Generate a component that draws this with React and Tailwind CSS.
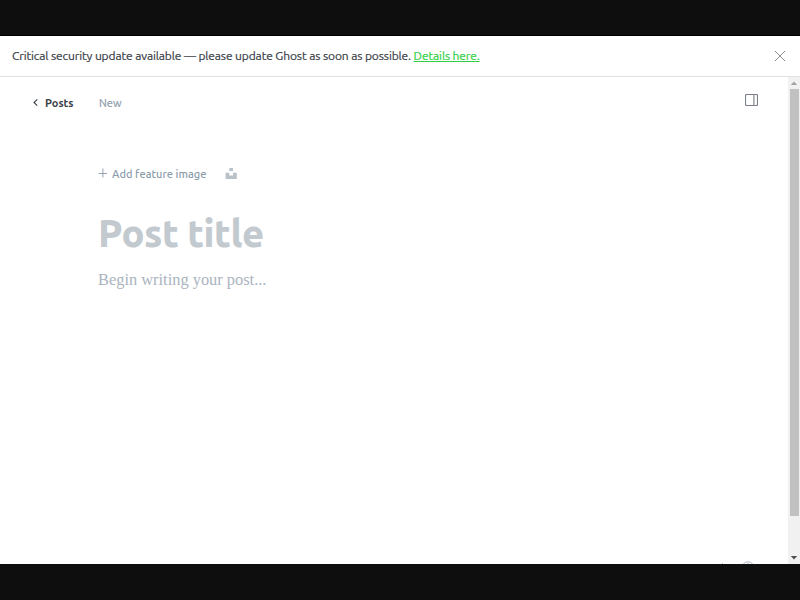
function CloseIcon() {
  return (
    <svg className="block h-[10px] w-[10px]" viewBox="0 0 10 10" fill="none" stroke="#7c8083" strokeWidth="0.9">
      <path d="M0 0L10 10M10 0L0 10" />
    </svg>
  );
}

function Banner() {
  return (
    <div className="flex h-[41px] shrink-0 items-center justify-between border-b border-[#dfe1e3] pl-3 pr-[15px]">
      <p className="whitespace-nowrap pb-px text-[12px] leading-4 tracking-[-0.12px] text-[#394047] [-webkit-text-stroke:0.2px]">
        Critical security update available — please update Ghost as soon as possible.{" "}
        <a href="#" className="text-[#30cf43] underline underline-offset-1">Details here.</a>
      </p>
      <button aria-label="Close" className="pb-px"><CloseIcon /></button>
    </div>
  );
}

function EditorHeader() {
  return (
    <header className="flex h-[50px] items-center pl-[33px] pr-[30px] text-[11px] leading-4">
      <a href="#" className="flex w-[66px] items-center pt-px font-bold text-[#394047]">
        <svg className="mr-[7px] h-[7px] w-[5px]" viewBox="0 0 5 7" fill="none" stroke="#394047" strokeWidth="1.1">
          <path d="M4.3 0.4L1 3.5L4.3 6.6" />
        </svg>
        Posts
      </a>
      <span className="pt-px text-[#8b9cab] [-webkit-text-stroke:0.2px]">New</span>
      <button aria-label="Settings" className="mb-[5px] ml-auto">
        <svg className="block h-3 w-[13px]" viewBox="0 0 13 12" fill="none" stroke="#7c8288" strokeWidth="1.15">
          <rect x="0.5" y="0.5" width="12" height="11" rx="1.2" />
          <path d="M8.9 0.5V11.5" />
        </svg>
      </button>
    </header>
  );
}

function Editor() {
  return (
    <main className="relative min-w-0 flex-1 overflow-hidden">
      <EditorHeader />
      <div className="pl-[98px] pt-[38px]">
        <div className="flex h-4 items-center text-[11px] leading-4 text-[#8b9cab]">
          <svg className="mb-px mr-[5px] h-[10px] w-[9px]" viewBox="0 0 9 10" stroke="#8b9cab" strokeWidth="0.9">
            <path d="M4.9 0.5V9.5M0.5 5.5H9" />
          </svg>
          <span className="w-[113px] whitespace-nowrap pt-px font-medium tracking-[0.04px]">Add feature image</span>
          <svg className="h-[11px] w-3" viewBox="0 0 12 11" fill="#b9c2c8">
            <path d="M4.3 0H8V3H4.3ZM0.6 4.7H4.3V7.5H8V4.7H11.8V11H0.6Z" />
          </svg>
        </div>
        <h1 className="mt-[27px] whitespace-nowrap text-[38px] font-extrabold leading-[50px] tracking-[-0.45px] text-[#c3cacf]">Post title</h1>
        <p className="mt-[10px] whitespace-nowrap font-['Liberation_Serif',serif] text-[16.4px] leading-6 text-[#abb4bf]">Begin writing your post...</p>
      </div>
      <div className="absolute left-[722px] top-[486px] flex items-start">
        <span className="h-1 w-px bg-[#b5bcc4]" />
        <svg className="-mt-[2px] ml-[18px] h-[14px] w-[14px]" viewBox="0 0 14 14" fill="none" stroke="#aeb6bd">
          <circle cx="7" cy="7" r="6.2" />
          <path d="M5.3 4.5C5.3 2.2 8.7 2.2 8.7 4.5" />
        </svg>
      </div>
    </main>
  );
}

function Scrollbar() {
  return (
    <div className="flex w-3 shrink-0 flex-col items-center bg-[#f1f1f1]">
      <svg className="h-3 w-3" viewBox="0 0 12 12" fill="#a3a3a3"><path d="M2.8 8L6 4.5L9.2 8Z" /></svg>
      <div className="ml-px h-[427px] w-[9px] bg-[#c1c1c1]" />
      <svg className="mt-auto h-3 w-3" viewBox="0 0 12 12" fill="#505050"><path d="M2.8 4L6 7.5L9.2 4Z" /></svg>
    </div>
  );
}

export default function App() {
  return (
    <div className="flex h-[600px] w-[800px] flex-col overflow-hidden bg-white font-['Ubuntu','Noto_Sans',sans-serif]">
      <div className="h-9 shrink-0 border-b border-black bg-[#0e0e0e]" />
      <Banner />
      <div className="flex min-h-0 flex-1">
        <Editor />
        <Scrollbar />
      </div>
      <div className="h-9 shrink-0 bg-[#0e0e0e]" />
    </div>
  );
}
